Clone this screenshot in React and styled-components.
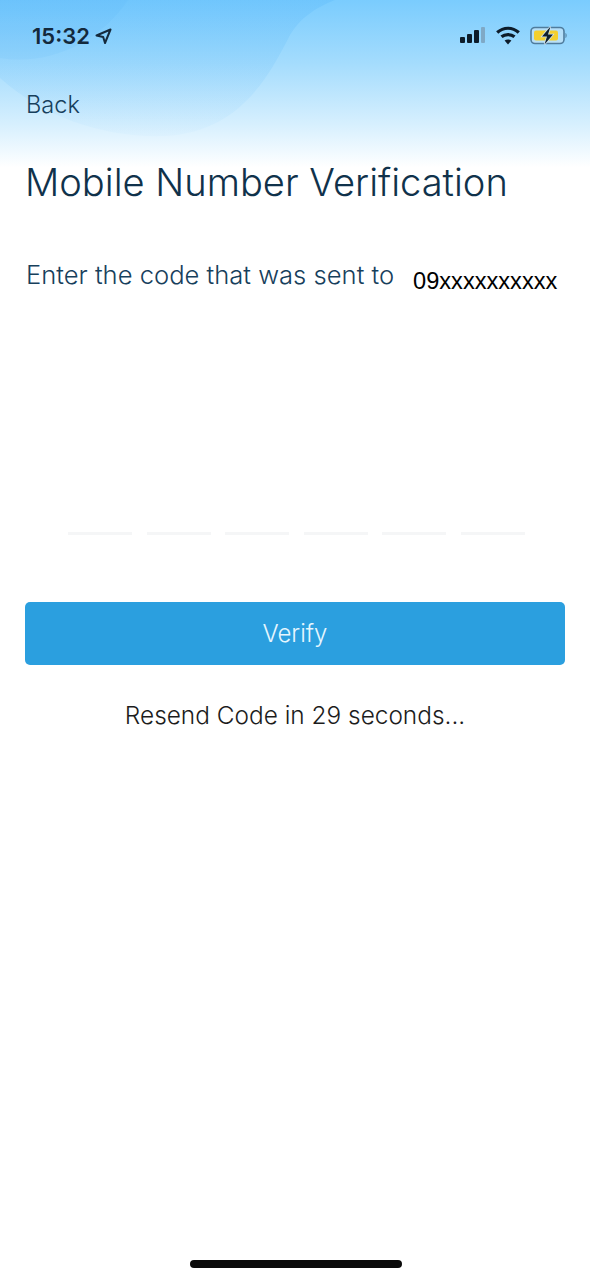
import React from 'react';
import styled, { createGlobalStyle } from 'styled-components';

const GlobalStyle = createGlobalStyle`
  html, body {
    margin: 0;
    padding: 0;
    background: #FFFFFF;
  }
`;

const Screen = styled.div`
  position: relative;
  width: 590px;
  height: 1280px;
  overflow: hidden;
  background: #FFFFFF;
  font-family: Inter, "Liberation Sans", sans-serif;
`;

const HeaderWash = styled.svg`
  position: absolute;
  top: 0;
  left: 0;
  width: 590px;
  height: 180px;
`;

const Content = styled.div`
  position: relative;
  display: flex;
  flex-direction: column;
`;

const StatusBar = styled.div`
  display: flex;
  align-items: center;
  justify-content: space-between;
  height: 24px;
  padding: 24px 22px 0 32px;
`;

const Time = styled.div`
  display: flex;
  align-items: center;
  gap: 5px;
  font-size: 22px;
  font-weight: 600;
  color: #14293c;
`;

const StatusIcons = styled.div`
  display: flex;
  align-items: center;
  gap: 10px;
`;

const BackLink = styled.div`
  margin: 44px 0 0 26px;
  height: 26px;
  line-height: 26px;
  font-size: 23.6px;
  font-weight: 300;
  color: #17405c;
`;

const Title = styled.h1`
  margin: 39px 0 0 25px;
  height: 50px;
  line-height: 50px;
  font-size: 38.1px;
  font-weight: 300;
  color: #10324b;
  white-space: nowrap;
`;

const SentRow = styled.div`
  display: flex;
  align-items: baseline;
  gap: 19px;
  margin: 53px 0 0 26px;
  height: 30px;
  line-height: 30px;
  color: #17405c;
`;

const SentLabel = styled.span`
  font-size: 25.6px;
  font-weight: 300;
  white-space: nowrap;
`;

const SentNumber = styled.span`
  position: relative;
  top: 5px;
  font-family: "Liberation Sans", Arial, sans-serif;
  font-size: 23.6px;
  color: #000000;
`;

const CodeRow = styled.div`
  display: flex;
  gap: 14.5px;
  margin: 242px 0 0 68px;
`;

const CodeSlot = styled.div`
  width: 64px;
  height: 3px;
  background: #f5f6f7;
`;

const VerifyButton = styled.button`
  display: block;
  width: 540px;
  height: 63px;
  margin: 67px 0 0 25px;
  padding: 0;
  border: none;
  border-radius: 5px;
  background: #2b9fdf;
  color: #e6f6fe;
  font-family: inherit;
  font-size: 24px;
  font-weight: 300;
`;

const ResendText = styled.div`
  margin-top: 35px;
  height: 30px;
  line-height: 30px;
  text-align: center;
  font-size: 24.4px;
  font-weight: 300;
  color: #1c1c1c;
`;

const HomeIndicator = styled.div`
  position: absolute;
  left: 190px;
  bottom: 12px;
  width: 212px;
  height: 8px;
  border-radius: 4px;
  background: #0a0a0a;
`;

const LocationArrow = () => (
  <svg width="17" height="17" viewBox="0 0 17 17">
    <path d="M1.5 7.5 L15.5 1.5 L10 15 L8.2 9 Z" fill="none" stroke="#14293c" strokeWidth="2" strokeLinejoin="round" />
  </svg>
);

const SignalIcon = () => (
  <svg width="26" height="20" viewBox="0 0 26 20">
    <rect x="0" y="11" width="5" height="6" rx="1" fill="#0d1c2a" />
    <rect x="7" y="8" width="5" height="9" rx="1" fill="#0d1c2a" />
    <rect x="14" y="4" width="5" height="13" rx="1" fill="#0d1c2a" />
    <rect x="21" y="1" width="4" height="16" rx="1" fill="#7fa9c6" />
  </svg>
);

const WifiIcon = () => (
  <svg width="24" height="20" viewBox="0 0 24 20">
    <path d="M1.2 6.5 C7.5 0.8 16.5 0.8 22.8 6.5" fill="none" stroke="#0d1c2a" strokeWidth="3.2" />
    <path d="M5.5 10.8 C9 7.8 15 7.8 18.5 10.8" fill="none" stroke="#0d1c2a" strokeWidth="3.2" />
    <path d="M12 18.5 L8.6 14.6 C10.5 13 13.5 13 15.4 14.6 Z" fill="#0d1c2a" />
  </svg>
);

const BatteryIcon = () => (
  <svg width="38" height="20" viewBox="0 0 38 20">
    <rect x="1" y="1.5" width="33" height="16" rx="4" fill="#cfe6f5" fillOpacity="0.6" stroke="#4f7c9d" strokeWidth="1.6" />
    <rect x="4" y="4.5" width="24" height="10" rx="2" fill="#f4cf2c" />
    <path d="M35.5 7 C37 7.5 37 11.5 35.5 12 Z" fill="#4f7c9d" />
    <path d="M20.5 0.5 L12 10.5 L17 10.5 L14.5 18.5 L23 8.5 L18 8.5 Z" fill="#cfe6f5" stroke="#cfe6f5" strokeWidth="1.5" />
    <path d="M20.5 0.5 L12 10.5 L17 10.5 L14.5 18.5 L23 8.5 L18 8.5 Z" fill="#12202c" />
  </svg>
);

const App = () => (
  <Screen>
    <GlobalStyle />
    <HeaderWash viewBox="0 0 590 180" preserveAspectRatio="none">
      <defs>
        <linearGradient id="wash" x1="0" y1="0" x2="0" y2="1">
          <stop offset="0" stopColor="#7accfe" />
          <stop offset="0.35" stopColor="#a4dcfd" />
          <stop offset="0.7" stopColor="#d8f0fe" />
          <stop offset="0.93" stopColor="#ffffff" />
        </linearGradient>
        <linearGradient id="blob" x1="0" y1="0" x2="0" y2="1">
          <stop offset="0" stopColor="#4cb0f8" stopOpacity="0.22" />
          <stop offset="1" stopColor="#4cb0f8" stopOpacity="0.03" />
        </linearGradient>
      </defs>
      <rect width="590" height="180" fill="url(#wash)" />
      <path d="M0 78 C45 118 105 138 165 136 C235 132 265 85 290 35 C300 18 315 8 335 0 L0 0 Z" fill="url(#blob)" />
      <path d="M0 0 L128 0 C100 42 50 66 0 58 Z" fill="#3ea6f5" fillOpacity="0.08" />
    </HeaderWash>
    <Content>
      <StatusBar>
        <Time>
          15:32
          <LocationArrow />
        </Time>
        <StatusIcons>
          <SignalIcon />
          <WifiIcon />
          <BatteryIcon />
        </StatusIcons>
      </StatusBar>
      <BackLink>Back</BackLink>
      <Title>Mobile Number Verification</Title>
      <SentRow>
        <SentLabel>Enter the code that was sent to</SentLabel>
        <SentNumber>09xxxxxxxxxx</SentNumber>
      </SentRow>
      <CodeRow>
        {[0, 1, 2, 3, 4, 5].map((slot) => (
          <CodeSlot key={`slot-${slot}`} />
        ))}
      </CodeRow>
      <VerifyButton>Verify</VerifyButton>
      <ResendText>Resend Code in 29 seconds...</ResendText>
    </Content>
    <HomeIndicator />
  </Screen>
);

export default App;
